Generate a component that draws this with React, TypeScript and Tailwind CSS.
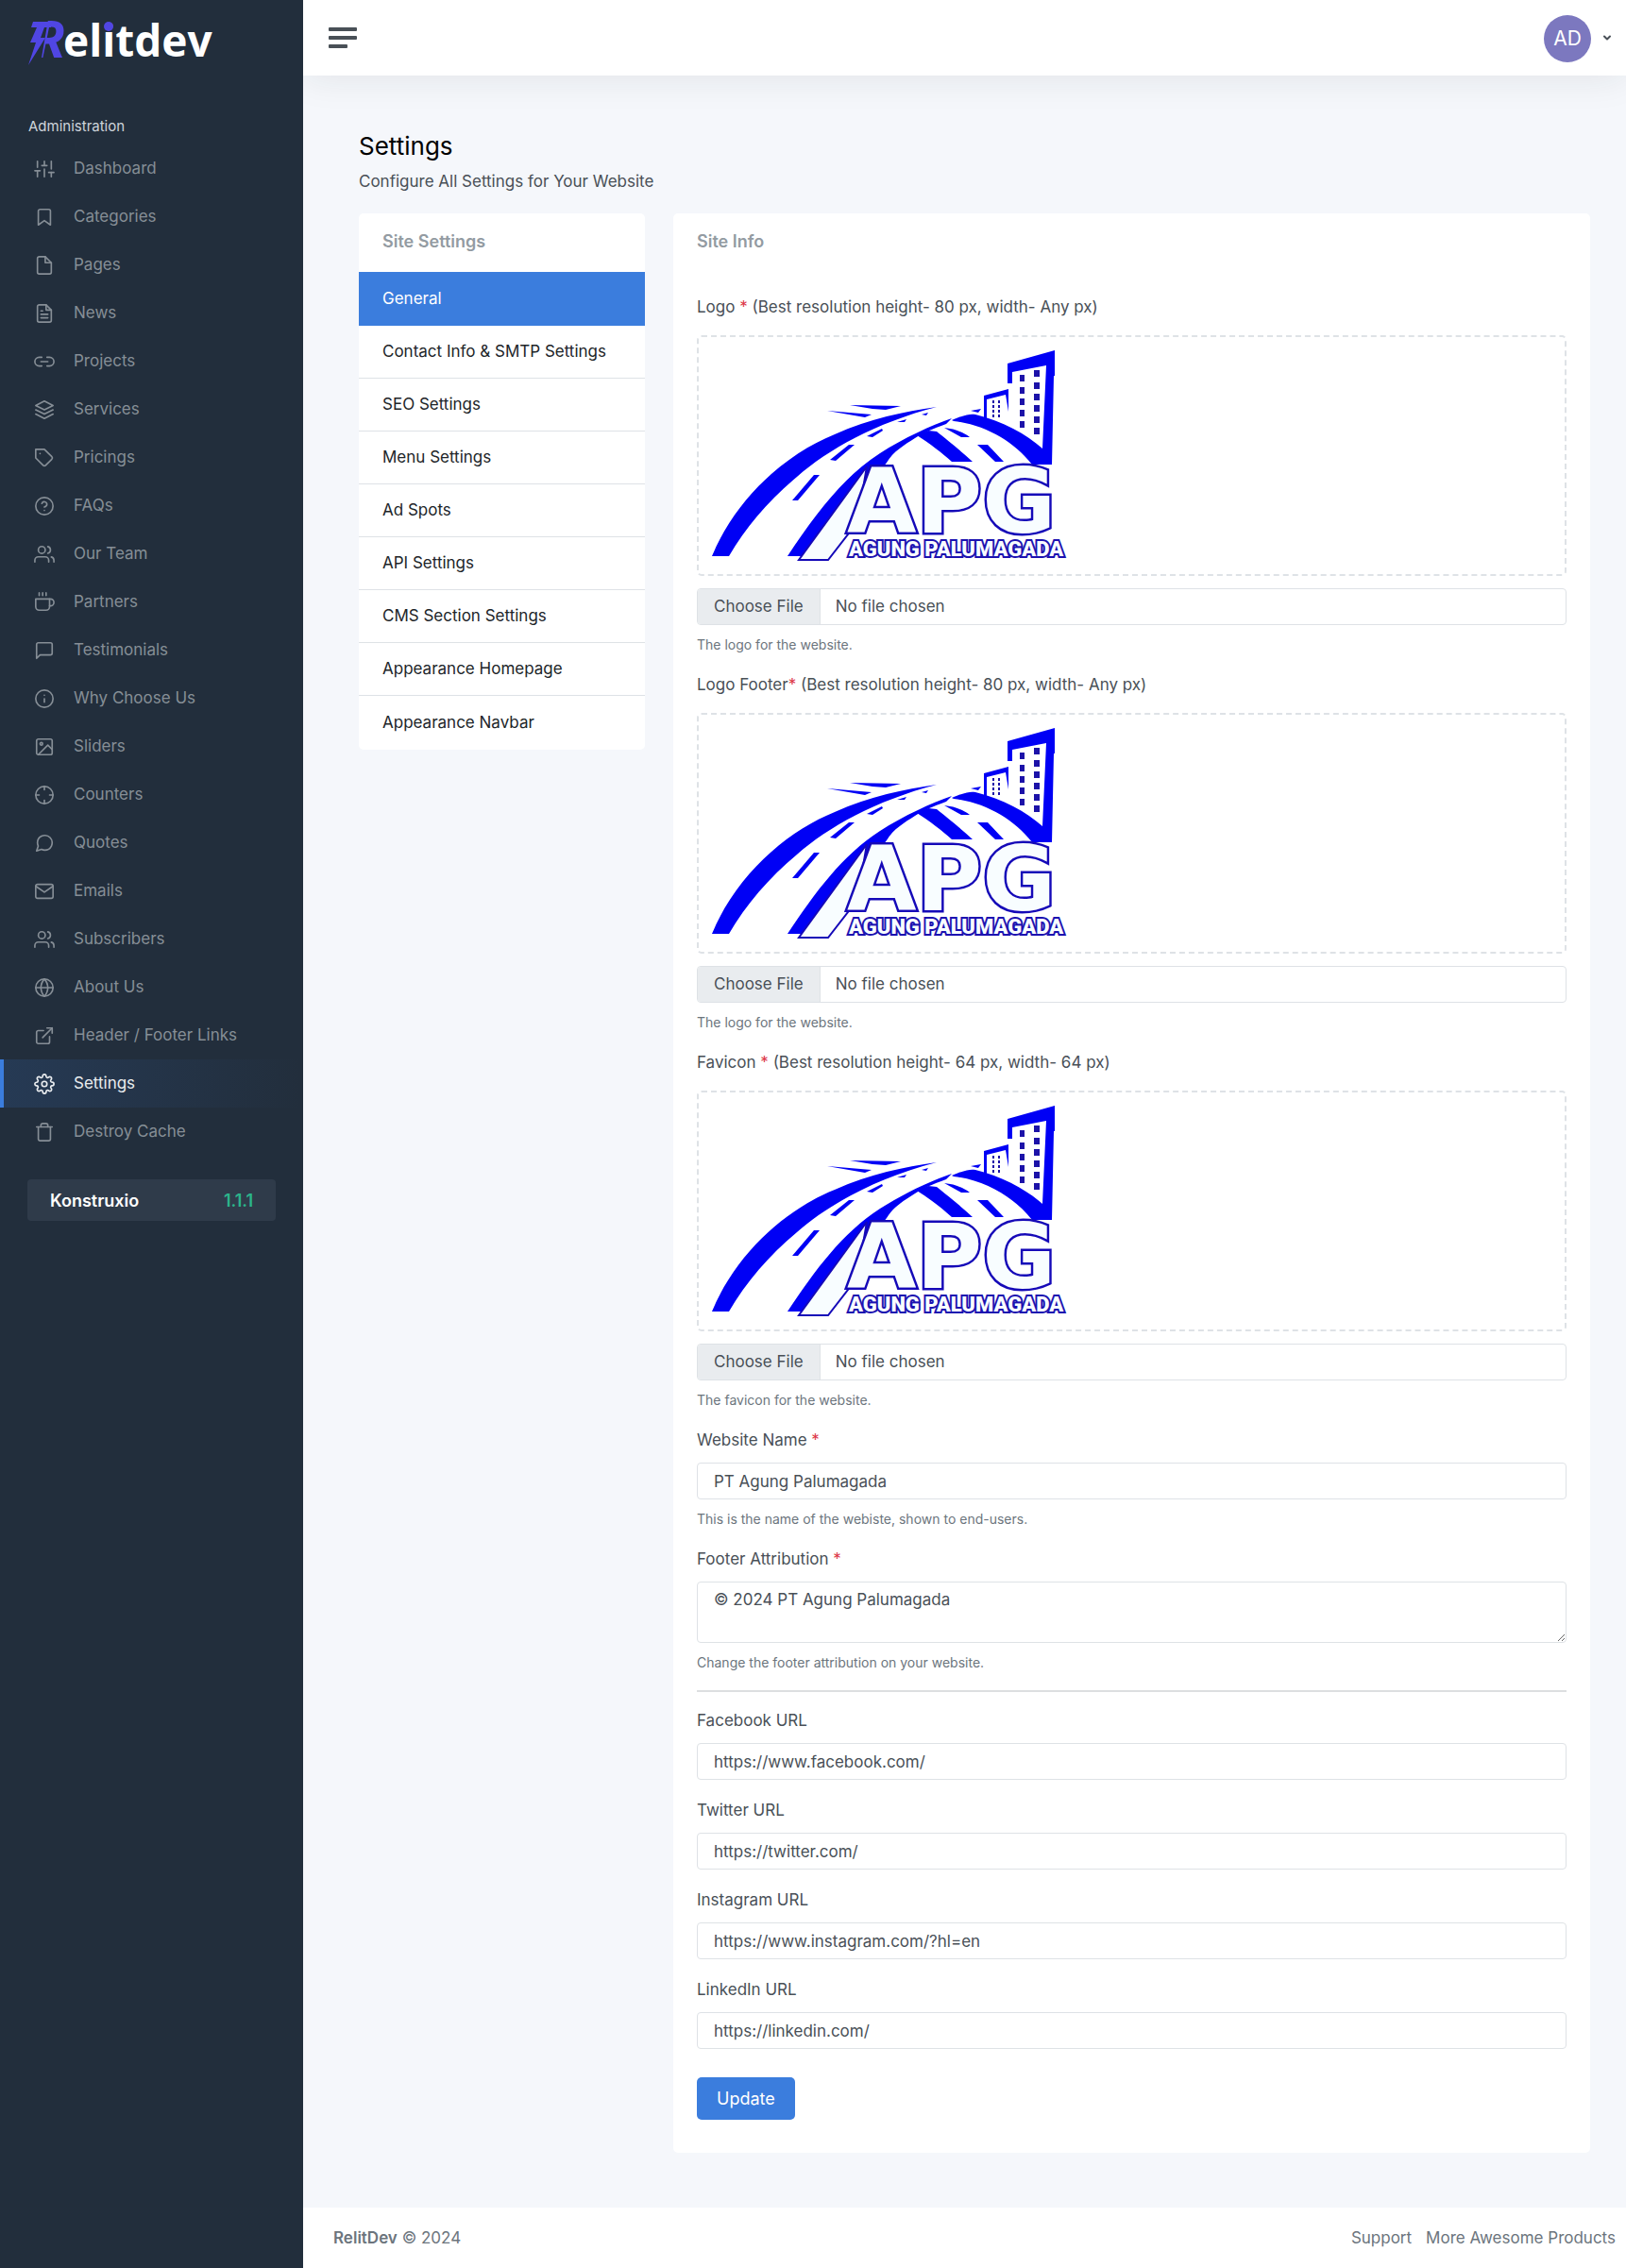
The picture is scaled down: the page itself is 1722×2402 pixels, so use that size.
import { useId } from "react";
import type { ReactNode } from "react";
import type { IconType } from "react-icons";
import {
  FiBookmark,
  FiChevronDown,
  FiCoffee,
  FiCrosshair,
  FiExternalLink,
  FiFile,
  FiFileText,
  FiGlobe,
  FiHelpCircle,
  FiImage,
  FiInfo,
  FiLayers,
  FiLink2,
  FiMail,
  FiMessageCircle,
  FiMessageSquare,
  FiSettings,
  FiSliders,
  FiTag,
  FiTrash,
  FiUsers,
} from "react-icons/fi";

const navItems: { label: string; icon: IconType; active?: boolean }[] = [
  { label: "Dashboard", icon: FiSliders },
  { label: "Categories", icon: FiBookmark },
  { label: "Pages", icon: FiFile },
  { label: "News", icon: FiFileText },
  { label: "Projects", icon: FiLink2 },
  { label: "Services", icon: FiLayers },
  { label: "Pricings", icon: FiTag },
  { label: "FAQs", icon: FiHelpCircle },
  { label: "Our Team", icon: FiUsers },
  { label: "Partners", icon: FiCoffee },
  { label: "Testimonials", icon: FiMessageSquare },
  { label: "Why Choose Us", icon: FiInfo },
  { label: "Sliders", icon: FiImage },
  { label: "Counters", icon: FiCrosshair },
  { label: "Quotes", icon: FiMessageCircle },
  { label: "Emails", icon: FiMail },
  { label: "Subscribers", icon: FiUsers },
  { label: "About Us", icon: FiGlobe },
  { label: "Header / Footer Links", icon: FiExternalLink },
  { label: "Settings", icon: FiSettings, active: true },
  { label: "Destroy Cache", icon: FiTrash },
];

const settingsTabs = [
  "General",
  "Contact Info & SMTP Settings",
  "SEO Settings",
  "Menu Settings",
  "Ad Spots",
  "API Settings",
  "CMS Section Settings",
  "Appearance Homepage",
  "Appearance Navbar",
];

const socialFields = [
  { label: "Facebook URL", value: "https://www.facebook.com/" },
  { label: "Twitter URL", value: "https://twitter.com/" },
  { label: "Instagram URL", value: "https://www.instagram.com/?hl=en" },
  { label: "LinkedIn URL", value: "https://linkedin.com/" },
];

function BrandLogo() {
  return (
    <svg viewBox="0 0 210 56" className="h-14 w-[210px] overflow-visible" role="img" aria-label="Relitdev">
      <text x="6" y="46" fontFamily="Noto Sans" fontWeight="700" fontStyle="italic" fontSize="53" fill="#5046e4">
        R
      </text>
      <path d="M0 0H22L14 46V56H0Z" fill="#222e3c" />
      <path d="M5 8H24V14H17L13 25H18L0 54L8 30H2L9 14H3Z" fill="#5046e4" />
      <text x="37" y="45" fontFamily="Open Sans" fontWeight="700" fontSize="46" fill="#fff">
        elitdev
      </text>
      <circle cx="85" cy="13" r="5" fill="#5046e4" />
    </svg>
  );
}

function CompanyLogo() {
  return (
    <svg
      viewBox="0 0 380 229"
      className="h-[229px] w-[380px] overflow-visible"
      role="img"
      aria-label="APG Agung Palumagada"
    >
      <g fill="#0000f5">
        <path d="M2 221C28 158 82 112 132 92C170 75 205 68 240 63C175 80 125 108 92 137C62 162 38 190 20 221Z" />
        <path d="M82 221C112 176 140 138 180 112C205 96 235 82 256 75L250 81C236 86 224 91 217 96C206 103 194 110 187 122L106 221Z" />
        <path d="M148 61L202 62L186 66L172 65Z" />
        <path d="M124 67L171 71L164 74Z" />
        <path d="M231 88L219 93C232 101 246 112 256 121H278C265 109 250 97 240 89Z" />
        <path d="M256 77C270 71 276 70 281 71C310 78 335 92 352 107L356 19L320 26V38H315V17L365 3V30H364L362 124H341C322 100 292 82 258 78Z" />
        <path d="M290 51L316 44V68L313 50L293 55V78H290Z" />
        <path d="M248 85C258 86 267 89 275 95L266 95Z" />
        <path d="M283 103H294L311 121H302Z" />
        <path d="M87 162L110 135L116 135L93 162Z" />
        <path d="M127 119L147 103H153L133 120Z" />
        <path d="M166 94L182 86L183 88L172 95Z" />
        <path d="M198 79L208 76L206 79ZM224 71L231 69L229 72ZM276 67L287 65L284 69Z" />
      </g>
      <g fill="#1c12a8">
        {[29, 42, 54, 66, 78].map((y) => (
          <rect key={y} x="328" y={y} width="5" height="7" />
        ))}
        {[24, 37, 49, 61, 73, 85].map((y) => (
          <rect key={y} x="343" y={y} width="6" height="7" />
        ))}
        {[56, 61, 66, 71].map((y) => (
          <path key={y} d={`M299 ${y}h2v3h-2ZM305 ${y}h2v3h-2Z`} />
        ))}
      </g>
      <path d="M166 126L94 225H125L156 185Z" fill="#f8fdff" stroke="#1509b8" strokeWidth="2" />
      <text
        x="145"
        y="196"
        fontFamily="DejaVu Sans"
        fontWeight="700"
        fontSize="95"
        fill="#f8fdff"
        stroke="#1509b8"
        strokeWidth="5"
        paintOrder="stroke"
      >
        APG
      </text>
      <text
        x="147"
        y="221"
        fontFamily="Roboto"
        fontWeight="900"
        fontSize="22"
        fill="#f8fdff"
        stroke="#1c12b0"
        strokeWidth="4"
        paintOrder="stroke"
      >
        AGUNG PALUMAGADA
      </text>
    </svg>
  );
}

function Required() {
  return <span className="text-[#dc3545]">*</span>;
}

function Help({ children }: { children: ReactNode }) {
  return <p className="mt-[10px] text-[14px] leading-[21px] text-[#6c757d]">{children}</p>;
}

function UploadField({ label, help }: { label: ReactNode; help: string }) {
  const id = useId();
  return (
    <div className="mb-5">
      <label htmlFor={id} className="block leading-[25px]">
        {label}
      </label>
      <div className="mt-[17px] rounded-[5px] border-2 border-dashed border-[#dee2e6] px-3 py-[11px]">
        <CompanyLogo />
      </div>
      <input
        id={id}
        type="file"
        className="mt-[13px] block h-[39px] w-full overflow-hidden rounded-[4px] border border-[#dee2e6] bg-white leading-[37px] file:mr-4 file:h-[37px] file:border-r file:border-[#dee2e6] file:bg-[#e9ecef] file:px-[17px] file:text-[#495057]"
      />
      <Help>{help}</Help>
    </div>
  );
}

function TextField({ label, value, help }: { label: ReactNode; value: string; help?: string }) {
  const id = useId();
  return (
    <div className="mb-5">
      <label htmlFor={id} className="mb-[11px] block leading-[25px]">
        {label}
      </label>
      <input
        id={id}
        type="text"
        defaultValue={value}
        className="block h-[39px] w-full rounded-[4px] border border-[#dee2e6] bg-white px-[17px]"
      />
      {help && <Help>{help}</Help>}
    </div>
  );
}

function Sidebar() {
  return (
    <aside className="relative z-10 w-[321px] shrink-0 bg-[#222e3c]">
      <a href="#" className="block pt-[15px] pl-[30px]">
        <BrandLogo />
      </a>
      <h2 className="mt-[52px] pl-[30px] text-[15px] leading-[22px] text-[#ced4da]">Administration</h2>
      <nav className="mt-2">
        {navItems.map(({ label, icon: Icon, active }) => (
          <a
            key={label}
            href="#"
            className={
              active
                ? "flex h-[51px] items-center gap-5 border-l-4 border-[#3b7ddd] bg-linear-to-r from-[#3b7ddd]/15 to-transparent pl-8 text-[#e9ecef]"
                : "flex h-[51px] items-center gap-5 border-l-4 border-transparent pl-8 text-[#868e96]"
            }
          >
            <Icon size={22} strokeWidth={1.8} />
            {label}
          </a>
        ))}
      </nav>
      <div className="mx-[29px] mt-[25px] flex h-11 items-center justify-between rounded-[4px] bg-[#2f3b4a] px-6 text-[18px] font-semibold">
        <span className="text-white">Konstruxio</span>
        <span className="text-[#2bb58b]">1.1.1</span>
      </div>
    </aside>
  );
}

export default function App() {
  const footerId = useId();
  return (
    <div className="flex min-h-screen bg-[#f5f7fb] font-[Inter,sans-serif] text-[17px] text-[#495057]">
      <Sidebar />
      <div className="flex min-w-0 grow flex-col">
        <header className="flex h-20 items-center justify-between bg-white pr-[14px] pl-[27px] shadow-[0_0_40px_rgba(33,37,41,0.1)]">
          <button type="button" aria-label="Toggle sidebar" className="flex flex-col gap-[5px]">
            <span className="h-1 w-[30px] rounded-[1px] bg-[#495057]" />
            <span className="h-1 w-[30px] rounded-[1px] bg-[#495057]" />
            <span className="h-1 w-5 rounded-[1px] bg-[#495057]" />
          </button>
          <button type="button" className="flex items-center gap-[11px]">
            <span className="mt-px flex size-[50px] items-center justify-center rounded-full bg-[#7c78bf] text-[21px] text-white">
              AD
            </span>
            <FiChevronDown size={12} strokeWidth={4} />
          </button>
        </header>

        <main className="grow px-[38px] pt-[57px] pb-[57px] pl-[59px]">
          <h1 className="text-[26px] leading-9 text-black">Settings</h1>
          <p className="mt-[6px] leading-[26px]">Configure All Settings for Your Website</p>

          <div className="mt-[21px] flex items-start gap-[30px]">
            <section className="w-[303px] shrink-0 overflow-hidden rounded-[5px] bg-white">
              <h2 className="px-[25px] pt-[17px] pb-[19px] text-[18px] leading-[26px] font-semibold text-[#939ba2]">
                Site Settings
              </h2>
              <nav>
                {settingsTabs.map((tab, i) => (
                  <a
                    key={tab}
                    href="#"
                    className={
                      i === 0
                        ? "flex h-[57px] items-center bg-[#3b7ddd] px-[25px] text-white"
                        : i === settingsTabs.length - 1
                          ? "flex h-[57px] items-center px-[25px] text-[#212529]"
                          : "flex h-14 items-center border-b border-[#dee2e6] px-[25px] text-[#212529]"
                    }
                  >
                    {tab}
                  </a>
                ))}
              </nav>
            </section>

            <section className="min-w-0 grow rounded-[5px] bg-white px-[25px] pt-[17px] pb-[35px]">
              <h2 className="text-[18px] leading-[26px] font-semibold text-[#939ba2]">Site Info</h2>
              <form className="mt-11">
                <UploadField
                  label={<>Logo <Required /> (Best resolution height- 80 px, width- Any px)</>}
                  help="The logo for the website."
                />
                <UploadField
                  label={<>Logo Footer<Required /> (Best resolution height- 80 px, width- Any px)</>}
                  help="The logo for the website."
                />
                <UploadField
                  label={<>Favicon <Required /> (Best resolution height- 64 px, width- 64 px)</>}
                  help="The favicon for the website."
                />
                <TextField
                  label={<>Website Name <Required /></>}
                  value="PT Agung Palumagada"
                  help="This is the name of the webiste, shown to end-users."
                />
                <div>
                  <label htmlFor={footerId} className="mb-[11px] block leading-[25px]">
                    Footer Attribution <Required />
                  </label>
                  <textarea
                    id={footerId}
                    defaultValue="© 2024 PT Agung Palumagada"
                    className="block h-[65px] w-full resize-y rounded-[4px] border border-[#dee2e6] bg-white px-[17px] py-[5px] leading-[26px]"
                  />
                  <Help>Change the footer attribution on your website.</Help>
                </div>
                <hr className="mt-[19px] mb-[18px] border-t-2 border-[#dcdee0]" />
                {socialFields.map((field) => (
                  <TextField key={field.label} label={field.label} value={field.value} />
                ))}
                <button
                  type="submit"
                  className="mt-[30px] block h-[45px] rounded-[5px] bg-[#3b7ddd] px-[21px] text-[18px] text-white"
                >
                  Update
                </button>
              </form>
            </section>
          </div>
        </main>

        <footer className="flex h-16 items-center justify-between bg-white pt-px pr-[11px] pl-8 text-[#6c757d]">
          <p>
            <a href="#" className="font-semibold">
              RelitDev
            </a>{" "}
            © 2024
          </p>
          <nav className="flex gap-[15px]">
            <a href="#">Support</a>
            <a href="#">More Awesome Products</a>
          </nav>
        </footer>
      </div>
    </div>
  );
}
